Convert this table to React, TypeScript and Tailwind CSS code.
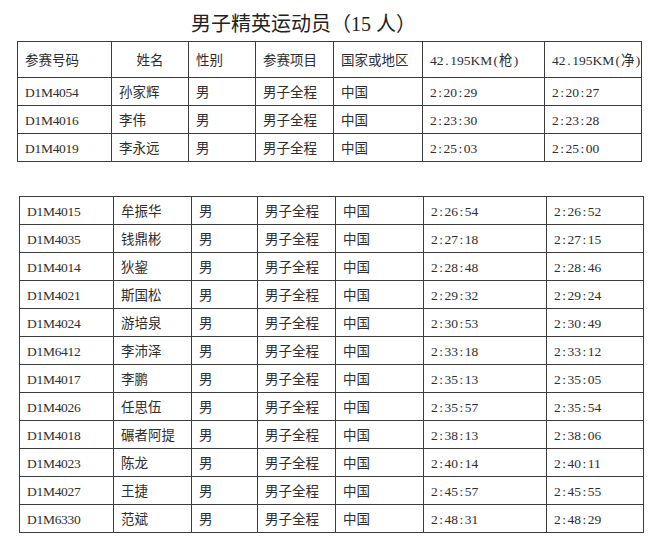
import React from 'react';

type Row = { id: string; name: string; time1: string; time2: string };

const top3: Row[] = [
  { id: 'D1M4054', name: '孙家辉', time1: '2:20:29', time2: '2:20:27' },
  { id: 'D1M4016', name: '李伟', time1: '2:23:30', time2: '2:23:28' },
  { id: 'D1M4019', name: '李永远', time1: '2:25:03', time2: '2:25:00' },
];

const rest: Row[] = [
  { id: 'D1M4015', name: '牟振华', time1: '2:26:54', time2: '2:26:52' },
  { id: 'D1M4035', name: '钱鼎彬', time1: '2:27:18', time2: '2:27:15' },
  { id: 'D1M4014', name: '狄鋆', time1: '2:28:48', time2: '2:28:46' },
  { id: 'D1M4021', name: '斯国松', time1: '2:29:32', time2: '2:29:24' },
  { id: 'D1M4024', name: '游培泉', time1: '2:30:53', time2: '2:30:49' },
  { id: 'D1M6412', name: '李沛泽', time1: '2:33:18', time2: '2:33:12' },
  { id: 'D1M4017', name: '李鹏', time1: '2:35:13', time2: '2:35:05' },
  { id: 'D1M4026', name: '任思伍', time1: '2:35:57', time2: '2:35:54' },
  { id: 'D1M4018', name: '碾者阿提', time1: '2:38:13', time2: '2:38:06' },
  { id: 'D1M4023', name: '陈龙', time1: '2:40:14', time2: '2:40:11' },
  { id: 'D1M4027', name: '王捷', time1: '2:45:57', time2: '2:45:55' },
  { id: 'D1M6330', name: '范斌', time1: '2:48:31', time2: '2:48:29' },
];

const cell = 'border border-[#3c3c3c] px-[7px] text-left align-middle whitespace-nowrap';
const cjk = 'text-[13.5px] [font-family:"Noto_Sans_CJK_SC",sans-serif]';
const latin = 'text-[13.5px] [font-family:"Liberation_Serif",serif]';

// half-width punctuation, the way the original's SimSun lays it out
function Latin({ text }: { text: string }) {
  return (
    <span className={latin}>
      {text.split('').map((ch, i) =>
        ch === ':' || ch === '.' || ch === '(' || ch === ')' ? (
          <span key={i} className="inline-block w-[6.75px] text-center">{ch}</span>
        ) : (
          <React.Fragment key={i}>{ch}</React.Fragment>
        )
      )}
    </span>
  );
}

function DataRow({ r }: { r: Row }) {
  return (
    <tr className="h-[28px]">
      <td className={`${cell} tracking-[-0.3px]`}><Latin text={r.id} /></td>
      <td className={`${cell} ${cjk}`}>{r.name}</td>
      <td className={`${cell} ${cjk}`}>男</td>
      <td className={`${cell} ${cjk}`}>男子全程</td>
      <td className={`${cell} ${cjk}`}>中国</td>
      <td className={cell}><Latin text={r.time1} /></td>
      <td className={cell}><Latin text={r.time2} /></td>
    </tr>
  );
}

export default function App() {
  return (
    <div className="w-[660px] h-[540px] bg-white text-[#2e2e2e] overflow-hidden">
      {/* title */}
      <div className="pt-[10px] pb-[6px] pl-[191px] h-[41px] leading-[25px] text-[20px] text-[#222] [font-family:'Liberation_Serif','Noto_Sans_CJK_SC',serif]">
        <span className="[font-family:'Noto_Sans_CJK_SC',sans-serif]">男子精英运动员（</span>
        15 <span className="[font-family:'Noto_Sans_CJK_SC',sans-serif]">人）</span>
      </div>

      {/* top three */}
      <table className="ml-[17px] w-[624px] table-fixed border-collapse">
        <colgroup>
          <col className="w-[94px]" />
          <col className="w-[77px]" />
          <col className="w-[67px]" />
          <col className="w-[78px]" />
          <col className="w-[89px]" />
          <col className="w-[122px]" />
          <col className="w-[97px]" />
        </colgroup>
        <thead>
          <tr className="h-[36px]">
            <th className={`${cell} ${cjk} font-normal`}>参赛号码</th>
            <th className={`${cell} ${cjk} font-normal !text-center`}>姓名</th>
            <th className={`${cell} ${cjk} font-normal`}>性别</th>
            <th className={`${cell} ${cjk} font-normal`}>参赛项目</th>
            <th className={`${cell} ${cjk} font-normal`}>国家或地区</th>
            <th className={`${cell} font-normal`}>
              <Latin text="42.195KM(" />
              <span className={cjk}>枪</span>
              <Latin text=")" />
            </th>
            <th className={`${cell} font-normal`}>
              <Latin text="42.195KM(" />
              <span className={cjk}>净</span>
              <Latin text=")" />
            </th>
          </tr>
        </thead>
        <tbody>
          {top3.map(r => (
            <DataRow key={r.id} r={r} />
          ))}
        </tbody>
      </table>

      {/* rest of the field */}
      <table className="ml-[19px] mt-[34px] w-[624px] table-fixed border-collapse">
        <colgroup>
          <col className="w-[94px]" />
          <col className="w-[78px]" />
          <col className="w-[66px]" />
          <col className="w-[78px]" />
          <col className="w-[88px]" />
          <col className="w-[123px]" />
          <col className="w-[97px]" />
        </colgroup>
        <tbody>
          {rest.map(r => (
            <DataRow key={r.id} r={r} />
          ))}
        </tbody>
      </table>
    </div>
  );
}
